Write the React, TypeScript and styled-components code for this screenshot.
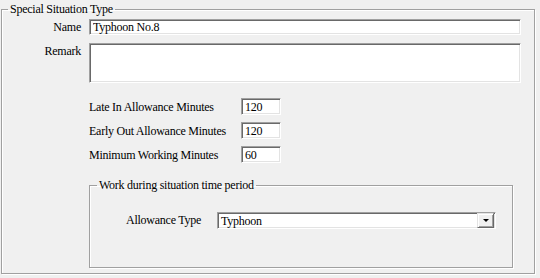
import React from "react";
import styled, { createGlobalStyle } from "styled-components";

const GlobalStyle = createGlobalStyle`
  body {
    margin: 0;
    background: #f0f0f0;
    font-family: "Liberation Serif", "Times New Roman", serif;
    font-size: 12px;
    letter-spacing: -0.25px;
    color: #000;
  }
`;

const Page = styled.div`
  width: 540px;
  height: 278px;
  padding: 2px 0 0 1px;
  box-sizing: border-box;
`;

const Group = styled.fieldset<{ $width: number; $height: number }>`
  box-sizing: border-box;
  width: ${(p) => p.$width}px;
  height: ${(p) => p.$height}px;
  min-width: 0;
  margin: 0;
  padding: 0;
  border: 1px solid #a0a0a0;
  box-shadow: inset 1px 1px 0 #ffffff, 1px 1px 0 #ffffff;
`;

const Legend = styled.legend<{ $offset: number }>`
  margin-left: ${(p) => p.$offset}px;
  padding: 0 2px;
  line-height: 14px;
`;

const Body = styled.div`
  padding-top: 3px;
`;

const TopGrid = styled.div`
  display: grid;
  grid-template-columns: 79px 432px;
  column-gap: 8px;
  row-gap: 8px;
`;

const Label = styled.label<{ $align?: string }>`
  text-align: ${(p) => p.$align || "left"};
  line-height: 14px;
  padding-top: 1px;
  white-space: nowrap;
`;

const sunken = `
  box-sizing: border-box;
  border-style: solid;
  border-width: 1px;
  border-color: #a0a0a0 #ffffff #ffffff #a0a0a0;
  box-shadow: inset 1px 1px 0 #696969, inset -1px -1px 0 #e3e3e3;
  background: #fff;
  font: inherit;
  letter-spacing: inherit;
  color: #000;
  outline: none;
`;

const TextBox = styled.input<{ $width?: number }>`
  ${sunken}
  width: ${(p) => (p.$width ? `${p.$width}px` : "100%")};
  height: ${(p) => (p.$width ? 17 : 16)}px;
  padding: 1px 2px 0 3px;
  margin: 0;
`;

const Memo = styled.textarea`
  ${sunken}
  width: 100%;
  height: 40px;
  resize: none;
  margin: 0;
  padding: 1px 3px;
`;

const Minutes = styled.div`
  margin: 15px 0 0 87px;
  display: grid;
  grid-template-columns: 152px 40px;
  row-gap: 7px;
  align-items: center;
`;

const Inner = styled.div`
  margin: 15px 0 0 87px;
`;

const InnerBody = styled.div`
  padding: 20px 0 0 36px;
  display: flex;
  align-items: flex-start;
`;

const Combo = styled.div`
  ${sunken}
  margin-left: auto;
  margin-right: 16px;
  width: 279px;
  height: 17px;
  display: flex;
  align-items: center;
  padding-left: 3px;
`;

const ComboText = styled.span`
  flex: 1;
  line-height: 14px;
  padding-top: 1px;
`;

const DropButton = styled.div`
  box-sizing: border-box;
  width: 17px;
  height: 15px;
  margin-right: 1px;
  background: #f0f0f0;
  border-style: solid;
  border-width: 1px;
  border-color: #e3e3e3 #696969 #696969 #e3e3e3;
  box-shadow: inset 1px 1px 0 #ffffff, inset -1px -1px 0 #a0a0a0;
  display: flex;
  align-items: center;
  justify-content: center;
`;

const Arrow = styled.span`
  width: 0;
  height: 0;
  border-left: 3px solid transparent;
  border-right: 3px solid transparent;
  border-top: 3px solid #000;
`;

export default function App() {
  return (
    <Page>
      <GlobalStyle />
      <Group $width={534} $height={272}>
        <Legend $offset={6}>Special Situation Type</Legend>
        <Body>
          <TopGrid>
            <Label $align="right">Name</Label>
            <TextBox defaultValue="Typhoon No.8" readOnly />
            <Label $align="right">Remark</Label>
            <Memo readOnly />
          </TopGrid>
          <Minutes>
            <Label>Late In Allowance Minutes</Label>
            <TextBox $width={40} defaultValue="120" readOnly />
            <Label>Early Out Allowance Minutes</Label>
            <TextBox $width={40} defaultValue="120" readOnly />
            <Label>Minimum Working Minutes</Label>
            <TextBox $width={40} defaultValue="60" readOnly />
          </Minutes>
          <Inner>
            <Group $width={424} $height={90}>
              <Legend $offset={7}>Work during situation time period</Legend>
              <InnerBody>
                <Label>Allowance Type</Label>
                <Combo>
                  <ComboText>Typhoon</ComboText>
                  <DropButton>
                    <Arrow />
                  </DropButton>
                </Combo>
              </InnerBody>
            </Group>
          </Inner>
        </Body>
      </Group>
    </Page>
  );
}
